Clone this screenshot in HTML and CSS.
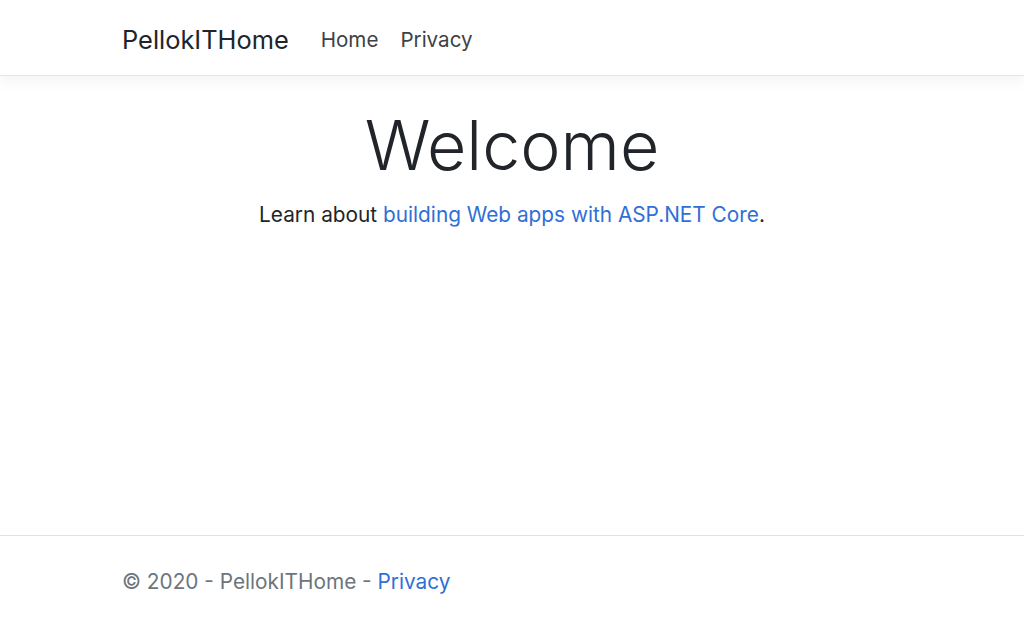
FILE: index.html
```html
<!DOCTYPE html>
<html lang="en">
  <head>
    <meta charset="UTF-8" />
    <meta name="viewport" content="width=device-width, initial-scale=1.0" />
    <title>Home Page - PellokITHome</title>
    <link rel="stylesheet" href="styles.css">
  </head>
  <body>
    <header>
      <nav class="navbar">
        <div class="container navbar_inner">
          <a class="navbar_brand" href="#">PellokITHome</a>
          <ul class="navbar_nav">
            <li><a class="nav_link" href="#">Home</a></li>
            <li><a class="nav_link" href="#">Privacy</a></li>
          </ul>
        </div>
      </nav>
    </header>

    <main class="container main">
      <div class="text_center">
        <h1 class="display">Welcome</h1>
        <p class="lead">Learn about <a href="#">building Web apps with ASP.NET Core</a>.</p>
      </div>
    </main>

    <footer class="footer">
      <div class="container">
        &copy; 2020 - PellokITHome - <a href="#">Privacy</a>
      </div>
    </footer>
  </body>
</html>
```

FILE: styles.css
```css
html, body {
  margin: 0;
  height: 100%;
}
body {
  display: flex;
  flex-direction: column;
  font-family: "Inter", "Liberation Sans", sans-serif;
  font-size: 20.8px;
  line-height: 1.5;
  color: #212529;
  background: #fff;
}
a {
  color: #2f6fd6;
  text-decoration: none;
}
.container {
  width: 780px;
  margin: 0 auto;
}

.navbar {
  height: 76px;
  padding-top: 5px;
  border-bottom: 1px solid #e3e3e8;
  box-shadow: 0 5px 14px rgba(0, 0, 0, 0.05);
  box-sizing: border-box;
  display: flex;
  align-items: center;
}
.navbar_inner {
  display: flex;
  align-items: center;
}
.navbar_brand {
  color: #212529;
  font-size: 25.4px;
  margin-right: 21px;
}
.navbar_nav {
  list-style: none;
  display: flex;
  margin: 0;
  padding: 0;
}
.nav_link {
  display: block;
  color: #3d4247;
  font-size: 20.6px;
  padding: 0 11px;
}

.main {
  flex: 1;
  padding-top: 29px;
}
.text_center {
  text-align: center;
}
.display {
  font-size: 68px;
  font-weight: 300;
  line-height: 1.2;
  margin: 0 0 12px;
}
.lead {
  margin: 0;
}

.footer {
  height: 92px;
  border-top: 1px solid #dee2e6;
  color: #6c757d;
  line-height: 92px;
}
```
